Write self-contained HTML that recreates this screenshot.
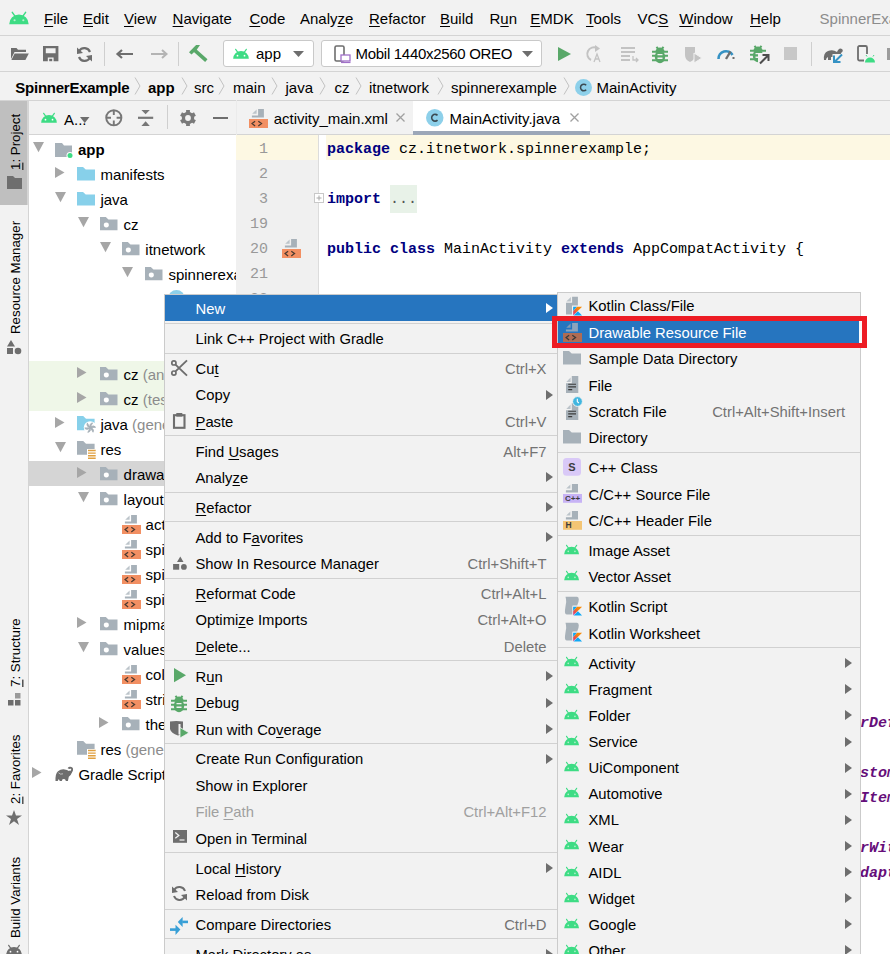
<!DOCTYPE html><html><head><meta charset="utf-8"><title>IDE</title><style>
*{margin:0;padding:0;box-sizing:border-box}
html,body{width:890px;height:954px;overflow:hidden;background:#f2f2f2;font-family:"Liberation Sans",sans-serif;font-size:14.6px;color:#000;position:relative}
.a{position:absolute}
.t{position:absolute;white-space:pre;line-height:1}
.u{text-decoration:underline;text-underline-offset:2px;text-decoration-thickness:1px}
svg{position:absolute;overflow:visible}
.mono{font-family:"Liberation Mono",monospace}
</style></head><body>
<svg class="a" style="left:9.1px;top:11.8px" width="19.9" height="12.14" viewBox="0 0 20 12.2"><path d="M0.2 12.2 A9.8 9.8 0 0 1 19.8 12.2 Z" fill="#3ddc84"/><path d="M3.3 0.4 L5.8 3.9 M16.7 0.4 L14.2 3.9" stroke="#3ddc84" stroke-width="1.5" stroke-linecap="round"/><circle cx="5.6" cy="8.3" r="1.1" fill="#b6efcf"/><circle cx="14.4" cy="8.3" r="1.1" fill="#b6efcf"/></svg>
<div class="t" style="left:44px;top:11px;font-size:15px"><span class="u">F</span>ile</div>
<div class="t" style="left:83px;top:11px;font-size:15px"><span class="u">E</span>dit</div>
<div class="t" style="left:124px;top:11px;font-size:15px"><span class="u">V</span>iew</div>
<div class="t" style="left:172.6px;top:11px;font-size:15px"><span class="u">N</span>avigate</div>
<div class="t" style="left:249.4px;top:11px;font-size:15px"><span class="u">C</span>ode</div>
<div class="t" style="left:300px;top:11px;font-size:15px">Analy<span class="u">z</span>e</div>
<div class="t" style="left:369px;top:11px;font-size:15px"><span class="u">R</span>efactor</div>
<div class="t" style="left:440px;top:11px;font-size:15px"><span class="u">B</span>uild</div>
<div class="t" style="left:489.5px;top:11px;font-size:15px">R<span class="u">u</span>n</div>
<div class="t" style="left:530.3px;top:11px;font-size:15px"><span class="u">E</span>MDK</div>
<div class="t" style="left:586px;top:11px;font-size:15px"><span class="u">T</span>ools</div>
<div class="t" style="left:637.5px;top:11px;font-size:15px">VC<span class="u">S</span></div>
<div class="t" style="left:679.3px;top:11px;font-size:15px"><span class="u">W</span>indow</div>
<div class="t" style="left:750px;top:11px;font-size:15px"><span class="u">H</span>elp</div>
<div class="t" style="left:819.6px;top:11px;font-size:15px;color:#8c8c8c">SpinnerExample</div>
<div class="a" style="left:0;top:35px;width:890px;height:1px;background:#d4d4d4"></div>
<div class="a" style="left:0;top:71px;width:890px;height:1px;background:#d4d4d4"></div>
<svg class="a" style="left:11.2px;top:47.9px" width="18" height="12" viewBox="0 0 18 12"><path d="M0 0 H5.5 L7 1.8 H15 V4 H3.5 L0 11 Z" fill="#6e6e6e"/><path d="M3.6 5.6 H17.8 L14.4 12 H0.4 Z" fill="#6e6e6e"/></svg>
<svg class="a" style="left:43.3px;top:46.4px" width="16" height="16" viewBox="0 0 16 16"><path d="M0 0 H15.4 V15.2 H0 Z M2.8 2.2 V7.3 H12.6 V2.2 Z M4.8 11.6 V15.2 H10.6 V11.6 Z" fill="#6e6e6e" fill-rule="evenodd"/><rect x="6.2" y="12.8" width="3" height="2.4" fill="#6e6e6e"/></svg>
<svg class="a" style="left:76px;top:46px" width="17" height="17" viewBox="0 0 17 17"><path d="M14 6 A6 6 0 0 0 3.2 5" stroke="#6e6e6e" stroke-width="2.2" fill="none"/><path d="M3 11 A6 6 0 0 0 13.8 12" stroke="#6e6e6e" stroke-width="2.2" fill="none"/><path d="M1 1.5 L1 8 L7 7 Z" fill="#6e6e6e"/><path d="M16 15.5 L16 9 L10 10 Z" fill="#6e6e6e"/></svg>
<div class="a" style="left:104px;top:42px;width:1px;height:24px;background:#cfcfcf"></div>
<svg class="a" style="left:116px;top:49px" width="18" height="10" viewBox="0 0 18 10"><path d="M17 5 H2 M6 1 L1.5 5 L6 9" stroke="#6e6e6e" stroke-width="2.2" fill="none"/></svg>
<svg class="a" style="left:150px;top:49px" width="18" height="10" viewBox="0 0 18 10"><path d="M1 5 H16 M12 1 L16.5 5 L12 9" stroke="#b4b4b4" stroke-width="2" fill="none"/></svg>
<div class="a" style="left:178px;top:42px;width:1px;height:24px;background:#cfcfcf"></div>
<svg class="a" style="left:180px;top:40px" width="35" height="28" viewBox="0 0 35 28"><path d="M9 12.2 L16.1 5.1 H20 L16.9 9.4 L11.5 14.6 Z" fill="#59a869"/><path d="M14.8 10.3 L26.3 20.6" stroke="#59a869" stroke-width="3.6"/></svg>
<div class="a" style="left:223px;top:40px;width:91px;height:27px;background:#fff;border:1px solid #c9c9c9;border-radius:3px"></div>
<svg class="a" style="left:233px;top:49px" width="16" height="9.76" viewBox="0 0 20 12.2"><path d="M0.2 12.2 A9.8 9.8 0 0 1 19.8 12.2 Z" fill="#3ddc84"/><path d="M3.3 0.4 L5.8 3.9 M16.7 0.4 L14.2 3.9" stroke="#3ddc84" stroke-width="1.5" stroke-linecap="round"/><circle cx="5.6" cy="8.3" r="1.1" fill="#fff"/><circle cx="14.4" cy="8.3" r="1.1" fill="#fff"/></svg>
<div class="t" style="left:256px;top:46px;font-size:15px">app</div>
<svg class="a" style="left:293px;top:51px" width="11" height="6"><path d="M0 0 L11 0 L5.5 6 Z" fill="#6e6e6e"/></svg>
<div class="a" style="left:321px;top:40px;width:221px;height:27px;background:#fff;border:1px solid #c9c9c9;border-radius:3px"></div>
<svg class="a" style="left:334px;top:45px" width="17" height="18" viewBox="0 0 17 18"><rect x="1" y="1" width="9" height="15" rx="1.5" stroke="#6e6e6e" stroke-width="1.6" fill="none"/><rect x="7" y="10" width="9" height="6" fill="#fff" stroke="#a070c8" stroke-width="1.3"/><path d="M7 17.5 H16.5" stroke="#a070c8" stroke-width="1.2"/></svg>
<div class="t" style="left:355.6px;top:46px;font-size:15px;letter-spacing:-0.3px">Mobil 1440x2560 OREO</div>
<svg class="a" style="left:522px;top:51px" width="11" height="6"><path d="M0 0 L11 0 L5.5 6 Z" fill="#6e6e6e"/></svg>
<svg class="a" style="left:558px;top:47px" width="13" height="14"><path d="M0 0 L13 7 L0 14 Z" fill="#59a869"/></svg>
<svg class="a" style="left:586px;top:45px" width="18" height="18" viewBox="0 0 18 18"><path d="M11 3 A6.5 6.5 0 1 0 5 15" stroke="#c3c3c3" stroke-width="2" fill="none"/><path d="M9 0 L14 3.5 L9 7 Z" fill="#c3c3c3"/><path d="M8 17 L11 9 L14 17 M9.2 14 H12.8" stroke="#c3c3c3" stroke-width="1.3" fill="none"/></svg>
<svg class="a" style="left:621px;top:47px" width="18" height="15" viewBox="0 0 18 15"><path d="M0 1 H14 M0 5 H14 M0 9 H9 M0 13 H9" stroke="#c3c3c3" stroke-width="1.8"/><path d="M12 9 V13 H17 M15 11 L17 13 L15 15" stroke="#c3c3c3" stroke-width="1.3" fill="none"/></svg>
<svg class="a" style="left:652px;top:46px" width="16.0" height="17.5" viewBox="0 0 16 17.5"><ellipse cx="8" cy="10.8" rx="5.2" ry="6.4" fill="#59a869"/><path d="M3.5 5.5 A4.5 4 0 0 1 12.5 5.5 Z" fill="#59a869"/><path d="M0 5.8 H16 M0 9.8 H16 M0 14.3 H16 M4.5 0.8 L6.5 3.5 M11.5 0.8 L9.5 3.5" stroke="#59a869" stroke-width="2"/><path d="M5.5 8.6 H10.5 M5.5 12.3 H10.5" stroke="#f2f2f2" stroke-width="1.4"/></svg>
<svg class="a" style="left:684px;top:46px" width="19" height="18" viewBox="0 0 19 18"><path d="M1 1 H11 V9 Q11 14 6 16 Q1 14 1 9 Z" fill="#c3c3c3"/><path d="M10 7 L18 12 L10 17 Z" fill="#c3c3c3" stroke="#f2f2f2" stroke-width="1"/></svg>
<svg class="a" style="left:717px;top:47px" width="18" height="13" viewBox="0 0 18 13"><path d="M1.5 12 A7.5 7.5 0 0 1 15.5 8" stroke="#3592c4" stroke-width="2.6" fill="none"/><path d="M9 12 L13.5 4.5" stroke="#6e6e6e" stroke-width="2.4"/><path d="M16.5 12 V10" stroke="#6e6e6e" stroke-width="2"/></svg>
<svg class="a" style="left:750px;top:45px" width="16.0" height="17.5" viewBox="0 0 16 17.5"><ellipse cx="8" cy="10.8" rx="5.2" ry="6.4" fill="#59a869"/><path d="M3.5 5.5 A4.5 4 0 0 1 12.5 5.5 Z" fill="#59a869"/><path d="M0 5.8 H16 M0 9.8 H16 M0 14.3 H16 M4.5 0.8 L6.5 3.5 M11.5 0.8 L9.5 3.5" stroke="#59a869" stroke-width="2"/><path d="M5.5 8.6 H10.5 M5.5 12.3 H10.5" stroke="#f2f2f2" stroke-width="1.4"/></svg>
<svg class="a" style="left:758px;top:53px" width="12" height="12" viewBox="0 0 12 12"><rect x="0" y="0" width="12" height="12" fill="#f2f2f2"/><path d="M2 10.5 L10 2.5 M4.5 2 H10.5 V8" stroke="#4d4d4d" stroke-width="2" fill="none"/></svg>
<div class="a" style="left:784px;top:47px;width:13px;height:13px;background:#c8c8c8"></div>
<div class="a" style="left:811px;top:42px;width:1px;height:24px;background:#cfcfcf"></div>
<svg class="a" style="left:823px;top:45px" width="21" height="18" viewBox="0 0 21 18"><path d="M1 15 Q0 8 5 6 Q10 4 14 7 Q16 2 19 4 Q21 6 18 8 L17 15 H14 V12 H8 V15 H5 V12 Q3 13 3 15 Z" fill="#6e6e6e"/><path d="M9.5 9 H21 V18 H9.5 Z" fill="#f2f2f2"/><path d="M19 9.5 L12 16.5 M11 10.5 V17 H17.5" stroke="#3592c4" stroke-width="2" fill="none"/></svg>
<svg class="a" style="left:857px;top:45px" width="18" height="18" viewBox="0 0 18 18"><rect x="1" y="1" width="9" height="14.5" rx="1.5" stroke="#6e6e6e" stroke-width="1.8" fill="none"/><rect x="7" y="9" width="11" height="9" fill="#f2f2f2"/><path d="M8 17.5 A5 5 0 0 1 18 17.5 Z" fill="#3ddc84"/><path d="M10 11.5 L9 10 M16 11.5 L17 10" stroke="#3ddc84" stroke-width="1"/></svg>
<div class="a" style="left:887px;top:48px;width:3px;height:12px;background:#9c9c9c"></div>
<div class="t" style="left:15.3px;top:79.8px;font-size:15px;font-weight:bold;letter-spacing:-0.25px">SpinnerExample</div>
<svg class="a" style="left:133.5px;top:77px" width="7" height="18" viewBox="0 0 7 18"><path d="M1 0.5 L6 9 L1 17.5" stroke="#c2c2c2" stroke-width="1" fill="none"/></svg>
<div class="t" style="left:148px;top:79.8px;font-size:15px;font-weight:bold">app</div>
<svg class="a" style="left:180.5px;top:77px" width="7" height="18" viewBox="0 0 7 18"><path d="M1 0.5 L6 9 L1 17.5" stroke="#c2c2c2" stroke-width="1" fill="none"/></svg>
<div class="t" style="left:194px;top:79.8px;font-size:15px">src</div>
<svg class="a" style="left:217.6px;top:77px" width="7" height="18" viewBox="0 0 7 18"><path d="M1 0.5 L6 9 L1 17.5" stroke="#c2c2c2" stroke-width="1" fill="none"/></svg>
<div class="t" style="left:233px;top:79.8px;font-size:15px">main</div>
<svg class="a" style="left:271px;top:77px" width="7" height="18" viewBox="0 0 7 18"><path d="M1 0.5 L6 9 L1 17.5" stroke="#c2c2c2" stroke-width="1" fill="none"/></svg>
<div class="t" style="left:285.5px;top:79.8px;font-size:15px">java</div>
<svg class="a" style="left:318.7px;top:77px" width="7" height="18" viewBox="0 0 7 18"><path d="M1 0.5 L6 9 L1 17.5" stroke="#c2c2c2" stroke-width="1" fill="none"/></svg>
<div class="t" style="left:334.5px;top:79.8px;font-size:15px">cz</div>
<svg class="a" style="left:355px;top:77px" width="7" height="18" viewBox="0 0 7 18"><path d="M1 0.5 L6 9 L1 17.5" stroke="#c2c2c2" stroke-width="1" fill="none"/></svg>
<div class="t" style="left:369px;top:79.8px;font-size:15px">itnetwork</div>
<svg class="a" style="left:437px;top:77px" width="7" height="18" viewBox="0 0 7 18"><path d="M1 0.5 L6 9 L1 17.5" stroke="#c2c2c2" stroke-width="1" fill="none"/></svg>
<div class="t" style="left:451px;top:79.8px;font-size:15px">spinnerexample</div>
<svg class="a" style="left:563px;top:77px" width="7" height="18" viewBox="0 0 7 18"><path d="M1 0.5 L6 9 L1 17.5" stroke="#c2c2c2" stroke-width="1" fill="none"/></svg>
<svg class="a" style="left:574.5px;top:79px" width="17" height="17" viewBox="0 0 17 17"><circle cx="8.5" cy="8.5" r="8.5" fill="#8dd0ea"/><path d="M11.2 6.2 A3.3 3.3 0 1 0 11.2 10.8" stroke="#3b4a52" stroke-width="1.5" fill="none"/></svg>
<div class="t" style="left:596.5px;top:79.8px;font-size:15px">MainActivity</div>
<div class="a" style="left:0;top:100px;width:890px;height:1px;background:#d4d4d4"></div>
<div class="a" style="left:0;top:101px;width:28px;height:853px;background:#f2f2f2"></div>
<div class="a" style="left:28px;top:101px;width:1px;height:853px;background:#d4d4d4"></div>
<div class="a" style="left:0;top:101px;width:27px;height:104px;background:#bfbfbf"></div><div class="a" style="left:27px;top:101px;width:1px;height:104px;background:#d5d5d5"></div>
<div class="t" style="left:16.2px;top:170px;font-size:13.3px;transform-origin:0 0;transform:rotate(-90deg) translate(0,-50%)"><span class="u">1</span>: Project</div>
<svg class="a" style="left:7px;top:176px" width="15" height="13" viewBox="0 0 15 13"><path d="M0 0 H6 L8 2 H15 V13 H0 Z" fill="#6e6e6e"/></svg>
<div class="t" style="left:16.2px;top:334px;font-size:13.3px;transform-origin:0 0;transform:rotate(-90deg) translate(0,-50%)">Resource Manager</div>
<svg class="a" style="left:7px;top:340px" width="15" height="14" viewBox="0 0 15 14"><path d="M4 0 L8 6.5 H0 Z" fill="#6e6e6e"/><rect x="0" y="8" width="6" height="6" fill="#6e6e6e"/><circle cx="11" cy="11" r="3.3" fill="#6e6e6e"/></svg>
<div class="t" style="left:16.2px;top:687px;font-size:13.3px;transform-origin:0 0;transform:rotate(-90deg) translate(0,-50%)"><span class="u">7</span>: Structure</div>
<svg class="a" style="left:8px;top:693px" width="13" height="13" viewBox="0 0 13 13"><rect x="7" y="0" width="5.5" height="5.5" fill="#9a9a9a"/><rect x="0" y="7" width="5.5" height="5.5" fill="#6e6e6e"/><rect x="7" y="7" width="5.5" height="5.5" fill="#6e6e6e"/></svg>
<div class="t" style="left:16.2px;top:804px;font-size:13.3px;transform-origin:0 0;transform:rotate(-90deg) translate(0,-50%)"><span class="u">2</span>: Favorites</div>
<svg class="a" style="left:6px;top:810px" width="16" height="15" viewBox="0 0 16 15"><path d="M8 0 L10 5.5 H16 L11 9 L13 15 L8 11.3 L3 15 L5 9 L0 5.5 H6 Z" fill="#6e6e6e"/></svg>
<div class="t" style="left:16.2px;top:938px;font-size:13.3px;transform-origin:0 0;transform:rotate(-90deg) translate(0,-50%)">Build Variants</div>
<svg class="a" style="left:6px;top:945px" width="16" height="9.76" viewBox="0 0 20 12.2"><path d="M0.2 12.2 A9.8 9.8 0 0 1 19.8 12.2 Z" fill="#6e6e6e"/><path d="M3.3 0.4 L5.8 3.9 M16.7 0.4 L14.2 3.9" stroke="#6e6e6e" stroke-width="1.5" stroke-linecap="round"/><circle cx="5.6" cy="8.3" r="1.1" fill="#fff"/><circle cx="14.4" cy="8.3" r="1.1" fill="#fff"/></svg>
<div class="a" style="left:29px;top:101px;width:207px;height:33px;background:#f2f2f2"></div>
<div class="a" style="left:29px;top:134px;width:207px;height:1px;background:#d4d4d4"></div>
<div class="a" style="left:29px;top:135px;width:207px;height:819px;background:#fff"></div>
<svg class="a" style="left:41px;top:113px" width="16" height="9.76" viewBox="0 0 20 12.2"><path d="M0.2 12.2 A9.8 9.8 0 0 1 19.8 12.2 Z" fill="#3ddc84"/><path d="M3.3 0.4 L5.8 3.9 M16.7 0.4 L14.2 3.9" stroke="#3ddc84" stroke-width="1.5" stroke-linecap="round"/><circle cx="5.6" cy="8.3" r="1.1" fill="#fff"/><circle cx="14.4" cy="8.3" r="1.1" fill="#fff"/></svg>
<div class="t" style="left:64px;top:112px;font-size:15px">A...</div>
<svg class="a" style="left:79.6px;top:116.5px" width="9.5" height="6"><path d="M0 0 L9.5 0 L4.75 6 Z" fill="#6e6e6e"/></svg>
<svg class="a" style="left:105.3px;top:109px" width="18" height="18" viewBox="0 0 18 18"><circle cx="8.8" cy="8.8" r="7.6" stroke="#777" stroke-width="1.9" fill="none"/><path d="M8.8 1.5 V6 M8.8 11.6 V16.1 M1.5 8.8 H6 M11.6 8.8 H16.1" stroke="#777" stroke-width="1.9"/></svg>
<svg class="a" style="left:138.4px;top:110px" width="16" height="16" viewBox="0 0 16 16"><path d="M0 7.8 H15.2" stroke="#777" stroke-width="2.2"/><path d="M3.4 0.1 H11.8 L7.6 4.3 Z M3.4 15.9 H11.8 L7.6 11.2 Z" fill="#777"/></svg>
<div class="a" style="left:166.5px;top:105px;width:1px;height:24px;background:#cfcfcf"></div>
<svg class="a" style="left:179.8px;top:110px" width="16" height="16" viewBox="0 0 16 16"><circle cx="8" cy="8" r="6.2" fill="#7a7a7a"/><rect transform="rotate(0 8 8)" x="6.1" y="0" width="3.8" height="16" fill="#7a7a7a"/><rect transform="rotate(60 8 8)" x="6.1" y="0" width="3.8" height="16" fill="#7a7a7a"/><rect transform="rotate(120 8 8)" x="6.1" y="0" width="3.8" height="16" fill="#7a7a7a"/><circle cx="8" cy="8" r="2.9" fill="#f2f2f2"/></svg>
<div class="a" style="left:212.5px;top:117px;width:15.5px;height:2px;background:#6e6e6e"></div>
<div class="a" style="left:29px;top:361px;width:207px;height:50px;background:#eff7e8"></div>
<div class="a" style="left:29px;top:461px;width:207px;height:25px;background:#d5d5d5"></div>
<svg class="a" style="left:33px;top:142px" width="11" height="10.3"><path d="M0 0 L11 0 L5.5 10.3 Z" fill="#a6a6a6"/></svg>
<svg class="a" style="left:55px;top:143px" width="19" height="16" viewBox="0 0 19 16"><path d="M0 0 H7 L9 2.5 H17 V14 H0 Z" fill="#a7b1b9"/><circle cx="15" cy="12.5" r="3.5" fill="#fff"/><circle cx="15" cy="12.5" r="2.5" fill="#3ddc84"/></svg>
<div class="t" style="left:78px;top:141.8px;font-size:15px;font-weight:bold;">app</div>
<svg class="a" style="left:55px;top:167.4px" width="9.5" height="11"><path d="M0 0 L9.5 5.5 L0 11 Z" fill="#a6a6a6"/></svg>
<svg class="a" style="left:77px;top:167.3px" width="18" height="13.5" viewBox="0 0 18 14" preserveAspectRatio="none"><path d="M0 0 H6 L8.7 2.6 H18 V14 H0 Z" fill="#87d0ea"/></svg>
<div class="t" style="left:100.4px;top:166.8px;font-size:15px;">manifests</div>
<svg class="a" style="left:55px;top:192px" width="11" height="10.3"><path d="M0 0 L11 0 L5.5 10.3 Z" fill="#a6a6a6"/></svg>
<svg class="a" style="left:77px;top:192.3px" width="18" height="13.5" viewBox="0 0 18 14" preserveAspectRatio="none"><path d="M0 0 H6 L8.7 2.6 H18 V14 H0 Z" fill="#87d0ea"/></svg>
<div class="t" style="left:100.4px;top:191.8px;font-size:15px;">java</div>
<svg class="a" style="left:77.5px;top:217px" width="11" height="10.3"><path d="M0 0 L11 0 L5.5 10.3 Z" fill="#a6a6a6"/></svg>
<svg class="a" style="left:100px;top:216.5px" width="17.5" height="13.3" viewBox="0 0 18 14" preserveAspectRatio="none"><path d="M0 0 H6 L8.7 2.6 H18 V14 H0 Z" fill="#a7b1b9"/><circle cx="6.5" cy="8.5" r="2.6" fill="#fff"/></svg>
<div class="t" style="left:123.6px;top:216.8px;font-size:15px;">cz</div>
<svg class="a" style="left:100px;top:242px" width="11" height="10.3"><path d="M0 0 L11 0 L5.5 10.3 Z" fill="#a6a6a6"/></svg>
<svg class="a" style="left:122.4px;top:241.5px" width="17.5" height="13.3" viewBox="0 0 18 14" preserveAspectRatio="none"><path d="M0 0 H6 L8.7 2.6 H18 V14 H0 Z" fill="#a7b1b9"/><circle cx="6.5" cy="8.5" r="2.6" fill="#fff"/></svg>
<div class="t" style="left:145.3px;top:241.8px;font-size:15px;">itnetwork</div>
<svg class="a" style="left:122.4px;top:267px" width="11" height="10.3"><path d="M0 0 L11 0 L5.5 10.3 Z" fill="#a6a6a6"/></svg>
<svg class="a" style="left:144.8px;top:266.5px" width="17.5" height="13.3" viewBox="0 0 18 14" preserveAspectRatio="none"><path d="M0 0 H6 L8.7 2.6 H18 V14 H0 Z" fill="#a7b1b9"/><circle cx="6.5" cy="8.5" r="2.6" fill="#fff"/></svg>
<div class="t" style="left:168.4px;top:266.8px;font-size:15px;">spinnerexample</div>
<svg class="a" style="left:168px;top:290px" width="17" height="17" viewBox="0 0 17 17"><circle cx="8.5" cy="8.5" r="8.5" fill="#8dd0ea"/><path d="M11.2 6.2 A3.3 3.3 0 1 0 11.2 10.8" stroke="#3b4a52" stroke-width="1.5" fill="none"/></svg>
<svg class="a" style="left:77px;top:367.4px" width="9.5" height="11"><path d="M0 0 L9.5 5.5 L0 11 Z" fill="#a6a6a6"/></svg>
<svg class="a" style="left:100px;top:366.5px" width="17.5" height="13.3" viewBox="0 0 18 14" preserveAspectRatio="none"><path d="M0 0 H6 L8.7 2.6 H18 V14 H0 Z" fill="#a7b1b9"/><circle cx="6.5" cy="8.5" r="2.6" fill="#fff"/></svg>
<div class="t" style="left:123.6px;top:366.8px;font-size:15px;">cz<span style="color:#8c8c8c"> (androidTest)</span></div>
<svg class="a" style="left:77px;top:392.4px" width="9.5" height="11"><path d="M0 0 L9.5 5.5 L0 11 Z" fill="#a6a6a6"/></svg>
<svg class="a" style="left:100px;top:391.5px" width="17.5" height="13.3" viewBox="0 0 18 14" preserveAspectRatio="none"><path d="M0 0 H6 L8.7 2.6 H18 V14 H0 Z" fill="#a7b1b9"/><circle cx="6.5" cy="8.5" r="2.6" fill="#fff"/></svg>
<div class="t" style="left:123.6px;top:391.8px;font-size:15px;">cz<span style="color:#8c8c8c"> (test)</span></div>
<svg class="a" style="left:55px;top:417.4px" width="9.5" height="11"><path d="M0 0 L9.5 5.5 L0 11 Z" fill="#a6a6a6"/></svg>
<svg class="a" style="left:77.2px;top:416px" width="20" height="19" viewBox="0 0 20 19"><path d="M0 0 H6.2 L9 2.8 H17.6 V14.2 H0 Z" fill="#87d0ea"/><circle cx="13.2" cy="11.6" r="6.4" fill="#fff"/><g fill="#a7b1b9" stroke="#a7b1b9" stroke-width="0.9" stroke-linejoin="round"><path transform="rotate(0 13.2 11.6)" d="M13.2 11.6 Q12.2 7.2 15.6 6.9 Q14.2 9 13.2 11.6 Z"/><path transform="rotate(60 13.2 11.6)" d="M13.2 11.6 Q12.2 7.2 15.6 6.9 Q14.2 9 13.2 11.6 Z"/><path transform="rotate(120 13.2 11.6)" d="M13.2 11.6 Q12.2 7.2 15.6 6.9 Q14.2 9 13.2 11.6 Z"/><path transform="rotate(180 13.2 11.6)" d="M13.2 11.6 Q12.2 7.2 15.6 6.9 Q14.2 9 13.2 11.6 Z"/><path transform="rotate(240 13.2 11.6)" d="M13.2 11.6 Q12.2 7.2 15.6 6.9 Q14.2 9 13.2 11.6 Z"/><path transform="rotate(300 13.2 11.6)" d="M13.2 11.6 Q12.2 7.2 15.6 6.9 Q14.2 9 13.2 11.6 Z"/></g><circle cx="13.2" cy="11.6" r="1.2" fill="#a7b1b9"/></svg>
<div class="t" style="left:100.4px;top:416.8px;font-size:15px;">java<span style="color:#8c8c8c"> (generated)</span></div>
<svg class="a" style="left:55px;top:442px" width="11" height="10.3"><path d="M0 0 L11 0 L5.5 10.3 Z" fill="#a6a6a6"/></svg>
<svg class="a" style="left:77.2px;top:441.2px" width="20" height="19" viewBox="0 0 20 19"><path d="M0 0 H6.2 L9 2.8 H17.6 V13.8 H0 Z" fill="#a7b1b9"/><rect x="10" y="8" width="10" height="11" fill="#fff"/><path d="M11 9.5 H18.7 M11 12.1 H18.7 M11 14.7 H18.7 M11 17.3 H18.7" stroke="#e0a040" stroke-width="1.4"/></svg>
<div class="t" style="left:100.4px;top:441.8px;font-size:15px;">res</div>
<svg class="a" style="left:77px;top:467.4px" width="9.5" height="11"><path d="M0 0 L9.5 5.5 L0 11 Z" fill="#a6a6a6"/></svg>
<svg class="a" style="left:100px;top:466.5px" width="17.5" height="13.3" viewBox="0 0 18 14" preserveAspectRatio="none"><path d="M0 0 H6 L8.7 2.6 H18 V14 H0 Z" fill="#a7b1b9"/><circle cx="6.5" cy="8.5" r="2.6" fill="#fff"/></svg>
<div class="t" style="left:123.6px;top:466.8px;font-size:15px;">drawable</div>
<svg class="a" style="left:77.5px;top:492px" width="11" height="10.3"><path d="M0 0 L11 0 L5.5 10.3 Z" fill="#a6a6a6"/></svg>
<svg class="a" style="left:100px;top:491.5px" width="17.5" height="13.3" viewBox="0 0 18 14" preserveAspectRatio="none"><path d="M0 0 H6 L8.7 2.6 H18 V14 H0 Z" fill="#a7b1b9"/><circle cx="6.5" cy="8.5" r="2.6" fill="#fff"/></svg>
<div class="t" style="left:123.6px;top:491.8px;font-size:15px;">layout</div>
<svg class="a" style="left:122px;top:515px" width="19" height="19" viewBox="0 0 19 19"><path d="M3.2 4.8 L7.6 0.4 V4.8 Z" fill="#bcc4ca"/><path d="M9.1 0 H14.9 V8.6 H2.9 V6.5 H9.1 Z" fill="#a7b1b9"/><rect x="0" y="10" width="19" height="9" fill="#f28f62"/><path d="M6.1 12.2 L3.1 14.5 L6.1 16.9 M9.3 12.2 L12.5 14.5 L9.3 16.9" stroke="#4a3a30" stroke-width="1.3" fill="none"/></svg>
<div class="t" style="left:145.6px;top:516.8px;font-size:15px;">activity_main.xml</div>
<svg class="a" style="left:122px;top:540px" width="19" height="19" viewBox="0 0 19 19"><path d="M3.2 4.8 L7.6 0.4 V4.8 Z" fill="#bcc4ca"/><path d="M9.1 0 H14.9 V8.6 H2.9 V6.5 H9.1 Z" fill="#a7b1b9"/><rect x="0" y="10" width="19" height="9" fill="#f28f62"/><path d="M6.1 12.2 L3.1 14.5 L6.1 16.9 M9.3 12.2 L12.5 14.5 L9.3 16.9" stroke="#4a3a30" stroke-width="1.3" fill="none"/></svg>
<div class="t" style="left:145.6px;top:541.8px;font-size:15px;">spinner_item.xml</div>
<svg class="a" style="left:122px;top:565px" width="19" height="19" viewBox="0 0 19 19"><path d="M3.2 4.8 L7.6 0.4 V4.8 Z" fill="#bcc4ca"/><path d="M9.1 0 H14.9 V8.6 H2.9 V6.5 H9.1 Z" fill="#a7b1b9"/><rect x="0" y="10" width="19" height="9" fill="#f28f62"/><path d="M6.1 12.2 L3.1 14.5 L6.1 16.9 M9.3 12.2 L12.5 14.5 L9.3 16.9" stroke="#4a3a30" stroke-width="1.3" fill="none"/></svg>
<div class="t" style="left:145.6px;top:566.8px;font-size:15px;">spinner_item2.xml</div>
<svg class="a" style="left:122px;top:590px" width="19" height="19" viewBox="0 0 19 19"><path d="M3.2 4.8 L7.6 0.4 V4.8 Z" fill="#bcc4ca"/><path d="M9.1 0 H14.9 V8.6 H2.9 V6.5 H9.1 Z" fill="#a7b1b9"/><rect x="0" y="10" width="19" height="9" fill="#f28f62"/><path d="M6.1 12.2 L3.1 14.5 L6.1 16.9 M9.3 12.2 L12.5 14.5 L9.3 16.9" stroke="#4a3a30" stroke-width="1.3" fill="none"/></svg>
<div class="t" style="left:145.6px;top:591.8px;font-size:15px;">spinner_item3.xml</div>
<svg class="a" style="left:77px;top:617.4px" width="9.5" height="11"><path d="M0 0 L9.5 5.5 L0 11 Z" fill="#a6a6a6"/></svg>
<svg class="a" style="left:100px;top:616.5px" width="17.5" height="13.3" viewBox="0 0 18 14" preserveAspectRatio="none"><path d="M0 0 H6 L8.7 2.6 H18 V14 H0 Z" fill="#a7b1b9"/><circle cx="6.5" cy="8.5" r="2.6" fill="#fff"/></svg>
<div class="t" style="left:123.6px;top:616.8px;font-size:15px;">mipmap</div>
<svg class="a" style="left:77.5px;top:642px" width="11" height="10.3"><path d="M0 0 L11 0 L5.5 10.3 Z" fill="#a6a6a6"/></svg>
<svg class="a" style="left:100px;top:641.5px" width="17.5" height="13.3" viewBox="0 0 18 14" preserveAspectRatio="none"><path d="M0 0 H6 L8.7 2.6 H18 V14 H0 Z" fill="#a7b1b9"/><circle cx="6.5" cy="8.5" r="2.6" fill="#fff"/></svg>
<div class="t" style="left:123.6px;top:641.8px;font-size:15px;">values</div>
<svg class="a" style="left:122px;top:665px" width="19" height="19" viewBox="0 0 19 19"><path d="M3.2 4.8 L7.6 0.4 V4.8 Z" fill="#bcc4ca"/><path d="M9.1 0 H14.9 V8.6 H2.9 V6.5 H9.1 Z" fill="#a7b1b9"/><rect x="0" y="10" width="19" height="9" fill="#f28f62"/><path d="M6.1 12.2 L3.1 14.5 L6.1 16.9 M9.3 12.2 L12.5 14.5 L9.3 16.9" stroke="#4a3a30" stroke-width="1.3" fill="none"/></svg>
<div class="t" style="left:145.6px;top:666.8px;font-size:15px;">colors.xml</div>
<svg class="a" style="left:122px;top:690px" width="19" height="19" viewBox="0 0 19 19"><path d="M3.2 4.8 L7.6 0.4 V4.8 Z" fill="#bcc4ca"/><path d="M9.1 0 H14.9 V8.6 H2.9 V6.5 H9.1 Z" fill="#a7b1b9"/><rect x="0" y="10" width="19" height="9" fill="#f28f62"/><path d="M6.1 12.2 L3.1 14.5 L6.1 16.9 M9.3 12.2 L12.5 14.5 L9.3 16.9" stroke="#4a3a30" stroke-width="1.3" fill="none"/></svg>
<div class="t" style="left:145.6px;top:691.8px;font-size:15px;">strings.xml</div>
<svg class="a" style="left:99px;top:717.4px" width="9.5" height="11"><path d="M0 0 L9.5 5.5 L0 11 Z" fill="#a6a6a6"/></svg>
<svg class="a" style="left:122px;top:716.5px" width="17.5" height="13.3" viewBox="0 0 18 14" preserveAspectRatio="none"><path d="M0 0 H6 L8.7 2.6 H18 V14 H0 Z" fill="#a7b1b9"/><circle cx="6.5" cy="8.5" r="2.6" fill="#fff"/></svg>
<div class="t" style="left:145.6px;top:716.8px;font-size:15px;">themes</div>
<svg class="a" style="left:77.2px;top:741.2px" width="20" height="19" viewBox="0 0 20 19"><path d="M0 0 H6.2 L9 2.8 H17.6 V13.8 H0 Z" fill="#a7b1b9"/><rect x="10" y="8" width="10" height="11" fill="#fff"/><path d="M11 9.5 H18.7 M11 12.1 H18.7 M11 14.7 H18.7 M11 17.3 H18.7" stroke="#e0a040" stroke-width="1.4"/></svg>
<div class="t" style="left:100.4px;top:741.8px;font-size:15px;">res<span style="color:#8c8c8c"> (generated)</span></div>
<svg class="a" style="left:31.5px;top:767.4px" width="9.5" height="11"><path d="M0 0 L9.5 5.5 L0 11 Z" fill="#a6a6a6"/></svg>
<svg class="a" style="left:54.9px;top:767px" width="19" height="15" viewBox="0 0 19 15"><path d="M0.5 13.9 Q0.2 6.5 3 4.2 Q5.5 2.2 8.5 2.3 Q12.5 2.5 14.5 4.6 L17.2 5 Q16 8.2 13.8 9.8 L12.9 13.9 H10.9 L10 12.3 Q8.5 11.7 7.5 12.3 L6.8 13.9 H4.8 L3.8 12.1 L2.7 13.9 Z" fill="#6e6e6e"/><path d="M13.6 4.3 Q16.6 5.6 17.1 3 Q17.4 0.5 14.8 0.7 Q13.8 0.9 13.5 1.7" stroke="#6e6e6e" stroke-width="1.9" fill="none"/><path d="M3.5 5.8 Q5.5 8 8 6.8" stroke="#fff" stroke-width="0.8" fill="none" opacity="0.7"/></svg>
<div class="t" style="left:78.4px;top:766.8px;font-size:15px;">Gradle Scripts</div>
<div class="a" style="left:236px;top:101px;width:654px;height:34px;background:#f2f2f2"></div><div class="a" style="left:236px;top:100px;width:1px;height:35px;background:#ebebeb"></div>
<div class="a" style="left:237px;top:134px;width:653px;height:1px;background:#d4d4d4"></div>
<svg class="a" style="left:249px;top:109px" width="19" height="19" viewBox="0 0 19 19"><path d="M3.2 4.8 L7.6 0.4 V4.8 Z" fill="#bcc4ca"/><path d="M9.1 0 H14.9 V8.6 H2.9 V6.5 H9.1 Z" fill="#a7b1b9"/><rect x="0" y="10" width="19" height="9" fill="#f28f62"/><path d="M6.1 12.2 L3.1 14.5 L6.1 16.9 M9.3 12.2 L12.5 14.5 L9.3 16.9" stroke="#4a3a30" stroke-width="1.3" fill="none"/></svg>
<div class="t" style="left:273.7px;top:111px;font-size:15px">activity_main.xml</div>
<svg class="a" style="left:396px;top:113px" width="9" height="9"><path d="M0.5 0.5 L8.5 8.5 M8.5 0.5 L0.5 8.5" stroke="#a0a0a0" stroke-width="1.3"/></svg>
<div class="a" style="left:413px;top:101px;width:177px;height:34px;background:#fff"></div>
<div class="a" style="left:413px;top:131px;width:177px;height:4px;background:#9ca7b8"></div>
<svg class="a" style="left:425.5px;top:109px" width="17.5" height="17.5" viewBox="0 0 17 17"><circle cx="8.5" cy="8.5" r="8.5" fill="#8dd0ea"/><path d="M11.2 6.2 A3.3 3.3 0 1 0 11.2 10.8" stroke="#3b4a52" stroke-width="1.5" fill="none"/></svg>
<div class="t" style="left:449.5px;top:111px;font-size:15px">MainActivity.java</div>
<svg class="a" style="left:570px;top:113px" width="9" height="9"><path d="M0.5 0.5 L8.5 8.5 M8.5 0.5 L0.5 8.5" stroke="#a0a0a0" stroke-width="1.3"/></svg>
<div class="a" style="left:236px;top:135px;width:654px;height:819px;background:#fff"></div>
<div class="a" style="left:236px;top:135px;width:82px;height:819px;background:#f0f0f0"></div>
<div class="a" style="left:318px;top:135px;width:1px;height:819px;background:#dcdcdc"></div>
<div class="a" style="left:236px;top:135px;width:82px;height:25px;background:#fdf8e3"></div>
<div class="a" style="left:326px;top:135px;width:564px;height:25px;background:#fdf8e3"></div>
<div class="t mono" style="left:237px;width:31px;text-align:right;top:142px;font-size:15px;color:#999">1</div>
<div class="t mono" style="left:237px;width:31px;text-align:right;top:167px;font-size:15px;color:#999">2</div>
<div class="t mono" style="left:237px;width:31px;text-align:right;top:192px;font-size:15px;color:#999">3</div>
<div class="t mono" style="left:237px;width:31px;text-align:right;top:217px;font-size:15px;color:#999">19</div>
<div class="t mono" style="left:237px;width:31px;text-align:right;top:242px;font-size:15px;color:#999">20</div>
<div class="t mono" style="left:237px;width:31px;text-align:right;top:267px;font-size:15px;color:#999">21</div>
<div class="t mono" style="left:237px;width:31px;text-align:right;top:292px;font-size:15px;color:#999">22</div>
<div class="t mono" style="left:327px;top:142px;font-size:15px;color:#000"><b style="color:#000080">package</b> cz.itnetwork.spinnerexample;</div>
<div class="t mono" style="left:327px;top:192px;font-size:15px;color:#000"><b style="color:#000080">import</b> <span style="background:#e8f2e8;color:#555;padding:6px 0 5px">...</span></div>
<div class="t mono" style="left:327px;top:242px;font-size:15px;color:#000"><b style="color:#000080">public class</b> MainActivity <b style="color:#000080">extends</b> AppCompatActivity {</div>
<svg class="a" style="left:313.5px;top:193px" width="10" height="10"><rect x="0.5" y="0.5" width="9" height="9" fill="#fff" stroke="#c8c8c8"/><path d="M2.5 5 H7.5 M5 2.5 V7.5" stroke="#a8a8a8"/></svg>
<svg class="a" style="left:281.5px;top:239px" width="19" height="19" viewBox="0 0 19 19"><path d="M3.2 4.8 L7.6 0.4 V4.8 Z" fill="#bcc4ca"/><path d="M9.1 0 H14.9 V8.6 H2.9 V6.5 H9.1 Z" fill="#a7b1b9"/><rect x="0" y="10" width="19" height="9" fill="#f28f62"/><path d="M6.1 12.2 L3.1 14.5 L6.1 16.9 M9.3 12.2 L12.5 14.5 L9.3 16.9" stroke="#4a3a30" stroke-width="1.3" fill="none"/></svg>
<div class="t mono" style="left:860px;top:716px;font-size:15px"><b style="color:#660e7a;font-style:italic">rDefault</b></div>
<div class="t mono" style="left:860px;top:766px;font-size:15px"><b style="color:#660e7a;font-style:italic">stom</b></div>
<div class="t mono" style="left:860px;top:791px;font-size:15px"><b style="color:#660e7a;font-style:italic">Item</b></div>
<div class="t mono" style="left:860px;top:841px;font-size:15px"><b style="color:#660e7a;font-style:italic">rWith</b></div>
<div class="t mono" style="left:860px;top:866px;font-size:15px"><b style="color:#660e7a;font-style:italic">dapter</b></div>
<div class="a" style="left:164px;top:294px;width:394px;height:700px;background:#f2f2f2;border:1px solid #cbcbcb"></div>
<div class="a" style="left:165px;top:295.00px;width:392px;height:26.4px;background:#2675bf"></div>
<div class="t" style="left:195.5px;top:302.00px;color:#fff;font-size:14.8px">New</div>
<svg class="a" style="left:546px;top:303.4px" width="7" height="10"><path d="M0 0 L7 5.0 L0 10 Z" fill="#fff"/></svg>
<div class="a" style="left:165px;top:322.65px;width:392px;height:1px;background:#d1d1d1"></div>
<div class="t" style="left:195.5px;top:331.90px;color:#000;font-size:14.8px">Link C++ Project with Gradle</div>
<div class="a" style="left:165px;top:352.55px;width:392px;height:1px;background:#d1d1d1"></div>
<div class="t" style="left:195.5px;top:361.80px;color:#000;font-size:14.8px">Cu<span class="u">t</span></div>
<svg class="a" style="left:170.8px;top:359.90px" width="17" height="17" viewBox="0 0 17 17"><circle cx="2.9" cy="2.9" r="2.1" stroke="#6e6e6e" stroke-width="1.7" fill="none"/><circle cx="2.9" cy="13.1" r="2.1" stroke="#6e6e6e" stroke-width="1.7" fill="none"/><path d="M4.5 4.6 L16 15.6 M4.5 11.4 L16 0.4" stroke="#6e6e6e" stroke-width="1.9"/></svg>
<div class="t" style="right:343.5px;top:361.80px;font-size:14.8px;color:#737373">Ctrl+X</div>
<div class="t" style="left:195.5px;top:388.20px;color:#000;font-size:14.8px">Copy</div>
<svg class="a" style="left:546px;top:389.5999999999999px" width="7" height="10"><path d="M0 0 L7 5.0 L0 10 Z" fill="#6e6e6e"/></svg>
<div class="t" style="left:195.5px;top:414.60px;color:#000;font-size:14.8px"><span class="u">P</span>aste</div>
<svg class="a" style="left:172.7px;top:412.50px" width="13" height="16" viewBox="0 0 13 16"><rect x="1" y="2.2" width="10.5" height="12.6" stroke="#6e6e6e" stroke-width="2.1" fill="none"/><rect x="3.3" y="0" width="6" height="3.6" fill="#6e6e6e"/></svg>
<div class="t" style="right:343.5px;top:414.60px;font-size:14.8px;color:#737373">Ctrl+V</div>
<div class="a" style="left:165px;top:435.25px;width:392px;height:1px;background:#d1d1d1"></div>
<div class="t" style="left:195.5px;top:444.50px;color:#000;font-size:14.8px">Find <span class="u">U</span>sages</div>
<div class="t" style="right:343.5px;top:444.50px;font-size:14.8px;color:#737373">Alt+F7</div>
<div class="t" style="left:195.5px;top:470.90px;color:#000;font-size:14.8px">Analy<span class="u">z</span>e</div>
<svg class="a" style="left:546px;top:472.29999999999984px" width="7" height="10"><path d="M0 0 L7 5.0 L0 10 Z" fill="#6e6e6e"/></svg>
<div class="a" style="left:165px;top:491.55px;width:392px;height:1px;background:#d1d1d1"></div>
<div class="t" style="left:195.5px;top:500.80px;color:#000;font-size:14.8px"><span class="u">R</span>efactor</div>
<svg class="a" style="left:546px;top:502.1999999999998px" width="7" height="10"><path d="M0 0 L7 5.0 L0 10 Z" fill="#6e6e6e"/></svg>
<div class="a" style="left:165px;top:521.45px;width:392px;height:1px;background:#d1d1d1"></div>
<div class="t" style="left:195.5px;top:530.70px;color:#000;font-size:14.8px">Add to F<span class="u">a</span>vorites</div>
<svg class="a" style="left:546px;top:532.0999999999998px" width="7" height="10"><path d="M0 0 L7 5.0 L0 10 Z" fill="#6e6e6e"/></svg>
<div class="t" style="left:195.5px;top:557.10px;color:#000;font-size:14.8px">Show In Resource Manager</div>
<svg class="a" style="left:172px;top:555.00px" width="16" height="16" viewBox="0 0 16 16"><path d="M5 7 H11.5 L8.3 1.4 Z" fill="#6e6e6e"/><rect x="1.1" y="9" width="6.1" height="5.7" fill="#6e6e6e"/><circle cx="11.9" cy="11.9" r="2.9" fill="#6e6e6e"/></svg>
<div class="t" style="right:343.5px;top:557.10px;font-size:14.8px;color:#737373">Ctrl+Shift+T</div>
<div class="a" style="left:165px;top:577.75px;width:392px;height:1px;background:#d1d1d1"></div>
<div class="t" style="left:195.5px;top:587.00px;color:#000;font-size:14.8px"><span class="u">R</span>eformat Code</div>
<div class="t" style="right:343.5px;top:587.00px;font-size:14.8px;color:#737373">Ctrl+Alt+L</div>
<div class="t" style="left:195.5px;top:613.40px;color:#000;font-size:14.8px">Optimi<span class="u">z</span>e Imports</div>
<div class="t" style="right:343.5px;top:613.40px;font-size:14.8px;color:#737373">Ctrl+Alt+O</div>
<div class="t" style="left:195.5px;top:639.80px;color:#000;font-size:14.8px"><span class="u">D</span>elete...</div>
<div class="t" style="right:343.5px;top:639.80px;font-size:14.8px;color:#737373">Delete</div>
<div class="a" style="left:165px;top:660.45px;width:392px;height:1px;background:#d1d1d1"></div>
<div class="t" style="left:195.5px;top:669.70px;color:#000;font-size:14.8px">R<span class="u">u</span>n</div>
<svg class="a" style="left:173.9px;top:667.60px" width="13" height="15"><path d="M0 0 L12 7.2 L0 14.3 Z" fill="#59a869"/></svg>
<svg class="a" style="left:546px;top:671.0999999999997px" width="7" height="10"><path d="M0 0 L7 5.0 L0 10 Z" fill="#6e6e6e"/></svg>
<div class="t" style="left:195.5px;top:696.10px;color:#000;font-size:14.8px"><span class="u">D</span>ebug</div>
<svg class="a" style="left:171px;top:694.7999999999997px" width="16.0" height="17.5" viewBox="0 0 16 17.5"><ellipse cx="8" cy="10.8" rx="5.2" ry="6.4" fill="#59a869"/><path d="M3.5 5.5 A4.5 4 0 0 1 12.5 5.5 Z" fill="#59a869"/><path d="M0 5.8 H16 M0 9.8 H16 M0 14.3 H16 M4.5 0.8 L6.5 3.5 M11.5 0.8 L9.5 3.5" stroke="#59a869" stroke-width="2"/><path d="M5.5 8.6 H10.5 M5.5 12.3 H10.5" stroke="#f2f2f2" stroke-width="1.4"/></svg>
<svg class="a" style="left:546px;top:697.4999999999997px" width="7" height="10"><path d="M0 0 L7 5.0 L0 10 Z" fill="#6e6e6e"/></svg>
<div class="t" style="left:195.5px;top:722.50px;color:#000;font-size:14.8px">Run with Co<span class="u">v</span>erage</div>
<svg class="a" style="left:170px;top:721.00px" width="19" height="18" viewBox="0 0 19 18"><path d="M0 0.5 Q6 -0.5 13 0.5 V10 Q13 13 8 14.5 Q1 12 0 8 Z" fill="#6e6e6e"/><path d="M8.5 3 H10.5 V13.5 H8.5 Z" fill="#f2f2f2"/><path d="M10 6.5 L19 11.8 L10 17 Z" fill="#59a869" stroke="#f2f2f2" stroke-width="0.8"/></svg>
<svg class="a" style="left:546px;top:723.8999999999996px" width="7" height="10"><path d="M0 0 L7 5.0 L0 10 Z" fill="#6e6e6e"/></svg>
<div class="a" style="left:165px;top:743.15px;width:392px;height:1px;background:#d1d1d1"></div>
<div class="t" style="left:195.5px;top:752.40px;color:#000;font-size:14.8px">Create Run Configuration</div>
<svg class="a" style="left:546px;top:753.7999999999996px" width="7" height="10"><path d="M0 0 L7 5.0 L0 10 Z" fill="#6e6e6e"/></svg>
<div class="t" style="left:195.5px;top:778.80px;color:#000;font-size:14.8px">Show in Explorer</div>
<div class="t" style="left:195.5px;top:805.20px;color:#a0a0a0;font-size:14.8px">File <span class="u">P</span>ath</div>
<div class="t" style="right:343.5px;top:805.20px;font-size:14.8px;color:#a0a0a0">Ctrl+Alt+F12</div>
<div class="t" style="left:195.5px;top:831.60px;color:#000;font-size:14.8px">Open in Terminal</div>
<svg class="a" style="left:173px;top:830px" width="14" height="13" viewBox="0 0 14 13"><rect x="0" y="0" width="14" height="12.8" fill="#6e6e6e"/><path d="M2.3 2.6 L5.8 5.4 L2.3 8.2" stroke="#f2f2f2" stroke-width="1.3" fill="none"/><path d="M6.5 10 H11.5" stroke="#f2f2f2" stroke-width="1.2"/></svg>
<div class="a" style="left:165px;top:852.25px;width:392px;height:1px;background:#d1d1d1"></div>
<div class="t" style="left:195.5px;top:861.50px;color:#000;font-size:14.8px">Local <span class="u">H</span>istory</div>
<svg class="a" style="left:546px;top:862.8999999999995px" width="7" height="10"><path d="M0 0 L7 5.0 L0 10 Z" fill="#6e6e6e"/></svg>
<div class="t" style="left:195.5px;top:887.90px;color:#000;font-size:14.8px">Reload from Disk</div>
<svg class="a" style="left:171px;top:884.90px" width="17" height="17" viewBox="0 0 17 17"><path d="M14 6 A6 6 0 0 0 3.2 5" stroke="#6e6e6e" stroke-width="2" fill="none"/><path d="M3 11 A6 6 0 0 0 13.8 12" stroke="#6e6e6e" stroke-width="2" fill="none"/><path d="M1 1.5 L1 8 L7 7 Z" fill="#6e6e6e"/><path d="M16 15.5 L16 9 L10 10 Z" fill="#6e6e6e"/></svg>
<div class="a" style="left:165px;top:908.55px;width:392px;height:1px;background:#d1d1d1"></div>
<div class="t" style="left:195.5px;top:917.80px;color:#000;font-size:14.8px">Compare Directories</div>
<svg class="a" style="left:170px;top:915.80px" width="19" height="20" viewBox="0 0 19 20"><path d="M0 13.6 H6" stroke="#389fd6" stroke-width="2.6"/><path d="M5.5 8.8 L10.4 13.6 L5.5 18.9 Z" fill="#389fd6"/><path d="M12.2 5.9 H18" stroke="#389fd6" stroke-width="2.6"/><path d="M12.6 1 L7.8 6 L12.6 10.9 Z" fill="#389fd6"/></svg>
<div class="t" style="right:343.5px;top:917.80px;font-size:14.8px;color:#737373">Ctrl+D</div>
<div class="a" style="left:165px;top:938.45px;width:392px;height:1px;background:#d1d1d1"></div>
<div class="t" style="left:195.5px;top:947.70px;color:#000;font-size:14.8px">Mark Directory as</div>
<svg class="a" style="left:546px;top:949.0999999999995px" width="7" height="10"><path d="M0 0 L7 5.0 L0 10 Z" fill="#6e6e6e"/></svg>
<div class="a" style="left:557px;top:292px;width:304px;height:700px;background:#f2f2f2;border:1px solid #cbcbcb"></div>
<div class="t" style="left:588.5px;top:299.30px;color:#000;font-size:14.8px">Kotlin Class/File</div>
<svg class="a" style="left:565px;top:296.5px" width="18" height="19" viewBox="0 0 18 19"><path d="M1.3 4.5 L5.9 -0.1 V4.5 Z" fill="#bcc4ca"/><path d="M7.1 -0.2 H12.9 V8.4 H7.1 Z M1 5.7 H7 V17.6 H1 Z M1 5.7 H7.1 V8.4 H1 Z" fill="#a7b1b9"/><defs><linearGradient id="kg1" x1="1" y1="0" x2="0" y2="1"><stop offset="0.35" stop-color="#f88909"/><stop offset="0.75" stop-color="#e44857"/><stop offset="1" stop-color="#c757bc"/></linearGradient></defs><path d="M7.6 9.2 H17.6 V18.9 H7.6 Z" fill="#f2f2f2"/><path d="M8.1 9.7 H12.1 L8.1 14.3 Z" fill="#0fa8f5"/><path d="M12.1 9.7 H17.1 L8.1 18.4 V14.3 Z" fill="url(#kg1)"/><path d="M8.6 18.4 L12.9 14.3 L17.1 18.4 Z" fill="#0fa8f5"/></svg>
<div class="a" style="left:558px;top:318.70px;width:302px;height:26.4px;background:#2675bf"></div>
<div class="t" style="left:588.5px;top:325.70px;color:#fff;font-size:14.8px">Drawable Resource File</div>
<svg class="a" style="left:563px;top:322.59999999999997px" width="19" height="19" viewBox="0 0 19 19"><path d="M3.2 4.8 L7.6 0.4 V4.8 Z" fill="#7f9ab5"/><path d="M9.1 0 H14.9 V8.6 H2.9 V6.5 H9.1 Z" fill="#8ea4bc"/><rect x="0" y="10" width="19" height="9" fill="#b06c53"/><path d="M6.1 12.2 L3.1 14.5 L6.1 16.9 M9.3 12.2 L12.5 14.5 L9.3 16.9" stroke="#3a3a3a" stroke-width="1.3" fill="none"/></svg>
<div class="t" style="left:588.5px;top:352.10px;color:#000;font-size:14.8px">Sample Data Directory</div>
<svg class="a" style="left:563px;top:350.59999999999997px" width="18" height="13.4" viewBox="0 0 18 14" preserveAspectRatio="none"><path d="M0 0 H6 L8.7 2.6 H18 V14 H0 Z" fill="#a7b1b9"/></svg>
<div class="t" style="left:588.5px;top:378.50px;color:#000;font-size:14.8px">File</div>
<svg class="a" style="left:565.7px;top:376.40px" width="13" height="17" viewBox="0 0 13 17"><path d="M0.3 6 L4.6 1.6 V6 Z" fill="#bcc4ca"/><path d="M5.8 0 H12.3 V17 H0 V7.3 H5.8 Z" fill="#a7b1b9"/><path d="M2.2 8.2 H10 M2.2 10.9 H10 M2.2 13.6 H6.2" stroke="#3c3c3c" stroke-width="1.1"/></svg>
<div class="t" style="left:588.5px;top:404.90px;color:#000;font-size:14.8px">Scratch File</div>
<svg class="a" style="left:565.7px;top:402.80px" width="13" height="17" viewBox="0 0 13 17"><path d="M0.3 6 L4.6 1.6 V6 Z" fill="#bcc4ca"/><path d="M5.8 0 H12.3 V17 H0 V7.3 H5.8 Z" fill="#a7b1b9"/><path d="M2.2 8.2 H10 M2.2 10.9 H10 M2.2 13.6 H6.2" stroke="#3c3c3c" stroke-width="1.1"/></svg><svg class="a" style="left:572.4px;top:395.60px" width="11" height="11" viewBox="0 0 11 11"><circle cx="5.5" cy="5.5" r="4.9" fill="#40b6e0" stroke="#f2f2f2" stroke-width="1"/><path d="M5.3 2.8 V5.6 L6.8 7" stroke="#fff" stroke-width="1.1" fill="none"/></svg>
<div class="t" style="right:45px;top:404.90px;font-size:14.8px;color:#737373">Ctrl+Alt+Shift+Insert</div>
<div class="t" style="left:588.5px;top:431.30px;color:#000;font-size:14.8px">Directory</div>
<svg class="a" style="left:563px;top:429.7999999999999px" width="18" height="13.4" viewBox="0 0 18 14" preserveAspectRatio="none"><path d="M0 0 H6 L8.7 2.6 H18 V14 H0 Z" fill="#a7b1b9"/></svg>
<div class="a" style="left:558px;top:451.95px;width:302px;height:1px;background:#d1d1d1"></div>
<div class="t" style="left:588.5px;top:461.20px;color:#000;font-size:14.8px">C++ Class</div>
<svg class="a" style="left:563.1px;top:458.00px" width="18" height="18" viewBox="0 0 18 18"><rect x="0" y="0" width="18" height="17.8" rx="3.5" fill="#d9c9f7"/><text x="9" y="13" font-family="Liberation Sans" font-weight="bold" font-size="11" text-anchor="middle" fill="#3c3c3c">S</text></svg>
<div class="t" style="left:588.5px;top:487.60px;color:#000;font-size:14.8px">C/C++ Source File</div>
<svg class="a" style="left:563px;top:484.09999999999985px" width="19" height="19" viewBox="0 0 19 19"><path d="M3.2 4.6 L7.4 0.4 V4.6 Z" fill="#bcc4ca"/><path d="M8.9 0 H15 V8.6 H2.9 V6.3 H8.9 Z" fill="#a7b1b9"/><rect x="0" y="10" width="19" height="8.8" fill="#c7b3f5"/><text x="9.5" y="17.2" font-family="Liberation Sans" font-weight="bold" font-size="8" text-anchor="middle" fill="#3c3c3c">C++</text></svg>
<div class="t" style="left:588.5px;top:514.00px;color:#000;font-size:14.8px">C/C++ Header File</div>
<svg class="a" style="left:563px;top:510.49999999999983px" width="19" height="19" viewBox="0 0 19 19"><path d="M3.2 4.6 L7.4 0.4 V4.6 Z" fill="#bcc4ca"/><path d="M8.9 0 H15 V8.6 H2.9 V6.3 H8.9 Z" fill="#a7b1b9"/><rect x="0" y="10" width="19" height="8.8" fill="#f4c574"/><text x="2.6" y="17.2" font-family="Liberation Sans" font-weight="bold" font-size="8.5" text-anchor="start" fill="#3c3c3c">H</text></svg>
<div class="a" style="left:558px;top:534.65px;width:302px;height:1px;background:#d1d1d1"></div>
<div class="t" style="left:588.5px;top:543.90px;color:#000;font-size:14.8px">Image Asset</div>
<svg class="a" style="left:564.3px;top:544.8px" width="15.2" height="9.27" viewBox="0 0 20 12.2"><path d="M0.2 12.2 A9.8 9.8 0 0 1 19.8 12.2 Z" fill="#3ddc84"/><path d="M3.3 0.4 L5.8 3.9 M16.7 0.4 L14.2 3.9" stroke="#3ddc84" stroke-width="1.5" stroke-linecap="round"/><circle cx="5.6" cy="8.3" r="1.1" fill="#b6efcf"/><circle cx="14.4" cy="8.3" r="1.1" fill="#b6efcf"/></svg>
<div class="t" style="left:588.5px;top:570.30px;color:#000;font-size:14.8px">Vector Asset</div>
<svg class="a" style="left:564.3px;top:571.1999999999999px" width="15.2" height="9.27" viewBox="0 0 20 12.2"><path d="M0.2 12.2 A9.8 9.8 0 0 1 19.8 12.2 Z" fill="#3ddc84"/><path d="M3.3 0.4 L5.8 3.9 M16.7 0.4 L14.2 3.9" stroke="#3ddc84" stroke-width="1.5" stroke-linecap="round"/><circle cx="5.6" cy="8.3" r="1.1" fill="#b6efcf"/><circle cx="14.4" cy="8.3" r="1.1" fill="#b6efcf"/></svg>
<div class="a" style="left:558px;top:590.95px;width:302px;height:1px;background:#d1d1d1"></div>
<div class="t" style="left:588.5px;top:600.20px;color:#000;font-size:14.8px">Kotlin Script</div>
<svg class="a" style="left:565px;top:596.8999999999999px" width="18" height="19" viewBox="0 0 18 19"><path d="M0.5 -0.2 H12 Q13.8 0 13.8 2.5 Q13.8 5 12.2 8.4 H7.5 V17.6 H2 Q-0.5 17.6 0 13 Q0.5 9 1.2 5 Q1.2 2 0.5 -0.2 Z" fill="#a7b1b9"/><defs><linearGradient id="kg2" x1="1" y1="0" x2="0" y2="1"><stop offset="0.35" stop-color="#f88909"/><stop offset="0.75" stop-color="#e44857"/><stop offset="1" stop-color="#c757bc"/></linearGradient></defs><path d="M7.6 9.2 H17.6 V18.9 H7.6 Z" fill="#f2f2f2"/><path d="M8.1 9.7 H12.1 L8.1 14.3 Z" fill="#0fa8f5"/><path d="M12.1 9.7 H17.1 L8.1 18.4 V14.3 Z" fill="url(#kg2)"/><path d="M8.6 18.4 L12.9 14.3 L17.1 18.4 Z" fill="#0fa8f5"/></svg>
<div class="t" style="left:588.5px;top:626.60px;color:#000;font-size:14.8px">Kotlin Worksheet</div>
<svg class="a" style="left:565px;top:623.2999999999998px" width="18" height="19" viewBox="0 0 18 19"><path d="M0.5 -0.2 H12 Q13.8 0 13.8 2.5 Q13.8 5 12.2 8.4 H7.5 V17.6 H2 Q-0.5 17.6 0 13 Q0.5 9 1.2 5 Q1.2 2 0.5 -0.2 Z" fill="#a7b1b9"/><defs><linearGradient id="kg3" x1="1" y1="0" x2="0" y2="1"><stop offset="0.35" stop-color="#f88909"/><stop offset="0.75" stop-color="#e44857"/><stop offset="1" stop-color="#c757bc"/></linearGradient></defs><path d="M7.6 9.2 H17.6 V18.9 H7.6 Z" fill="#f2f2f2"/><path d="M8.1 9.7 H12.1 L8.1 14.3 Z" fill="#0fa8f5"/><path d="M12.1 9.7 H17.1 L8.1 18.4 V14.3 Z" fill="url(#kg3)"/><path d="M8.6 18.4 L12.9 14.3 L17.1 18.4 Z" fill="#0fa8f5"/></svg>
<div class="a" style="left:558px;top:647.25px;width:302px;height:1px;background:#d1d1d1"></div>
<div class="t" style="left:588.5px;top:656.50px;color:#000;font-size:14.8px">Activity</div>
<svg class="a" style="left:564.3px;top:657.3999999999999px" width="15.2" height="9.27" viewBox="0 0 20 12.2"><path d="M0.2 12.2 A9.8 9.8 0 0 1 19.8 12.2 Z" fill="#3ddc84"/><path d="M3.3 0.4 L5.8 3.9 M16.7 0.4 L14.2 3.9" stroke="#3ddc84" stroke-width="1.5" stroke-linecap="round"/><circle cx="5.6" cy="8.3" r="1.1" fill="#b6efcf"/><circle cx="14.4" cy="8.3" r="1.1" fill="#b6efcf"/></svg>
<svg class="a" style="left:845px;top:657.8999999999997px" width="7" height="10"><path d="M0 0 L7 5.0 L0 10 Z" fill="#6e6e6e"/></svg>
<div class="t" style="left:588.5px;top:682.90px;color:#000;font-size:14.8px">Fragment</div>
<svg class="a" style="left:564.3px;top:683.7999999999998px" width="15.2" height="9.27" viewBox="0 0 20 12.2"><path d="M0.2 12.2 A9.8 9.8 0 0 1 19.8 12.2 Z" fill="#3ddc84"/><path d="M3.3 0.4 L5.8 3.9 M16.7 0.4 L14.2 3.9" stroke="#3ddc84" stroke-width="1.5" stroke-linecap="round"/><circle cx="5.6" cy="8.3" r="1.1" fill="#b6efcf"/><circle cx="14.4" cy="8.3" r="1.1" fill="#b6efcf"/></svg>
<svg class="a" style="left:845px;top:684.2999999999997px" width="7" height="10"><path d="M0 0 L7 5.0 L0 10 Z" fill="#6e6e6e"/></svg>
<div class="t" style="left:588.5px;top:709.00px;color:#000;font-size:14.8px">Folder</div>
<svg class="a" style="left:564.3px;top:709.8999999999999px" width="15.2" height="9.27" viewBox="0 0 20 12.2"><path d="M0.2 12.2 A9.8 9.8 0 0 1 19.8 12.2 Z" fill="#3ddc84"/><path d="M3.3 0.4 L5.8 3.9 M16.7 0.4 L14.2 3.9" stroke="#3ddc84" stroke-width="1.5" stroke-linecap="round"/><circle cx="5.6" cy="8.3" r="1.1" fill="#b6efcf"/><circle cx="14.4" cy="8.3" r="1.1" fill="#b6efcf"/></svg>
<svg class="a" style="left:845px;top:710.3999999999997px" width="7" height="10"><path d="M0 0 L7 5.0 L0 10 Z" fill="#6e6e6e"/></svg>
<div class="t" style="left:588.5px;top:735.10px;color:#000;font-size:14.8px">Service</div>
<svg class="a" style="left:564.3px;top:735.9999999999999px" width="15.2" height="9.27" viewBox="0 0 20 12.2"><path d="M0.2 12.2 A9.8 9.8 0 0 1 19.8 12.2 Z" fill="#3ddc84"/><path d="M3.3 0.4 L5.8 3.9 M16.7 0.4 L14.2 3.9" stroke="#3ddc84" stroke-width="1.5" stroke-linecap="round"/><circle cx="5.6" cy="8.3" r="1.1" fill="#b6efcf"/><circle cx="14.4" cy="8.3" r="1.1" fill="#b6efcf"/></svg>
<svg class="a" style="left:845px;top:736.4999999999998px" width="7" height="10"><path d="M0 0 L7 5.0 L0 10 Z" fill="#6e6e6e"/></svg>
<div class="t" style="left:588.5px;top:761.20px;color:#000;font-size:14.8px">UiComponent</div>
<svg class="a" style="left:564.3px;top:762.0999999999999px" width="15.2" height="9.27" viewBox="0 0 20 12.2"><path d="M0.2 12.2 A9.8 9.8 0 0 1 19.8 12.2 Z" fill="#3ddc84"/><path d="M3.3 0.4 L5.8 3.9 M16.7 0.4 L14.2 3.9" stroke="#3ddc84" stroke-width="1.5" stroke-linecap="round"/><circle cx="5.6" cy="8.3" r="1.1" fill="#b6efcf"/><circle cx="14.4" cy="8.3" r="1.1" fill="#b6efcf"/></svg>
<svg class="a" style="left:845px;top:762.5999999999998px" width="7" height="10"><path d="M0 0 L7 5.0 L0 10 Z" fill="#6e6e6e"/></svg>
<div class="t" style="left:588.5px;top:787.30px;color:#000;font-size:14.8px">Automotive</div>
<svg class="a" style="left:564.3px;top:788.1999999999999px" width="15.2" height="9.27" viewBox="0 0 20 12.2"><path d="M0.2 12.2 A9.8 9.8 0 0 1 19.8 12.2 Z" fill="#3ddc84"/><path d="M3.3 0.4 L5.8 3.9 M16.7 0.4 L14.2 3.9" stroke="#3ddc84" stroke-width="1.5" stroke-linecap="round"/><circle cx="5.6" cy="8.3" r="1.1" fill="#b6efcf"/><circle cx="14.4" cy="8.3" r="1.1" fill="#b6efcf"/></svg>
<svg class="a" style="left:845px;top:788.6999999999998px" width="7" height="10"><path d="M0 0 L7 5.0 L0 10 Z" fill="#6e6e6e"/></svg>
<div class="t" style="left:588.5px;top:813.40px;color:#000;font-size:14.8px">XML</div>
<svg class="a" style="left:564.3px;top:814.3px" width="15.2" height="9.27" viewBox="0 0 20 12.2"><path d="M0.2 12.2 A9.8 9.8 0 0 1 19.8 12.2 Z" fill="#3ddc84"/><path d="M3.3 0.4 L5.8 3.9 M16.7 0.4 L14.2 3.9" stroke="#3ddc84" stroke-width="1.5" stroke-linecap="round"/><circle cx="5.6" cy="8.3" r="1.1" fill="#b6efcf"/><circle cx="14.4" cy="8.3" r="1.1" fill="#b6efcf"/></svg>
<svg class="a" style="left:845px;top:814.7999999999998px" width="7" height="10"><path d="M0 0 L7 5.0 L0 10 Z" fill="#6e6e6e"/></svg>
<div class="t" style="left:588.5px;top:839.50px;color:#000;font-size:14.8px">Wear</div>
<svg class="a" style="left:564.3px;top:840.4px" width="15.2" height="9.27" viewBox="0 0 20 12.2"><path d="M0.2 12.2 A9.8 9.8 0 0 1 19.8 12.2 Z" fill="#3ddc84"/><path d="M3.3 0.4 L5.8 3.9 M16.7 0.4 L14.2 3.9" stroke="#3ddc84" stroke-width="1.5" stroke-linecap="round"/><circle cx="5.6" cy="8.3" r="1.1" fill="#b6efcf"/><circle cx="14.4" cy="8.3" r="1.1" fill="#b6efcf"/></svg>
<svg class="a" style="left:845px;top:840.8999999999999px" width="7" height="10"><path d="M0 0 L7 5.0 L0 10 Z" fill="#6e6e6e"/></svg>
<div class="t" style="left:588.5px;top:865.60px;color:#000;font-size:14.8px">AIDL</div>
<svg class="a" style="left:564.3px;top:866.5px" width="15.2" height="9.27" viewBox="0 0 20 12.2"><path d="M0.2 12.2 A9.8 9.8 0 0 1 19.8 12.2 Z" fill="#3ddc84"/><path d="M3.3 0.4 L5.8 3.9 M16.7 0.4 L14.2 3.9" stroke="#3ddc84" stroke-width="1.5" stroke-linecap="round"/><circle cx="5.6" cy="8.3" r="1.1" fill="#b6efcf"/><circle cx="14.4" cy="8.3" r="1.1" fill="#b6efcf"/></svg>
<svg class="a" style="left:845px;top:866.9999999999999px" width="7" height="10"><path d="M0 0 L7 5.0 L0 10 Z" fill="#6e6e6e"/></svg>
<div class="t" style="left:588.5px;top:891.70px;color:#000;font-size:14.8px">Widget</div>
<svg class="a" style="left:564.3px;top:892.6px" width="15.2" height="9.27" viewBox="0 0 20 12.2"><path d="M0.2 12.2 A9.8 9.8 0 0 1 19.8 12.2 Z" fill="#3ddc84"/><path d="M3.3 0.4 L5.8 3.9 M16.7 0.4 L14.2 3.9" stroke="#3ddc84" stroke-width="1.5" stroke-linecap="round"/><circle cx="5.6" cy="8.3" r="1.1" fill="#b6efcf"/><circle cx="14.4" cy="8.3" r="1.1" fill="#b6efcf"/></svg>
<svg class="a" style="left:845px;top:893.0999999999999px" width="7" height="10"><path d="M0 0 L7 5.0 L0 10 Z" fill="#6e6e6e"/></svg>
<div class="t" style="left:588.5px;top:917.80px;color:#000;font-size:14.8px">Google</div>
<svg class="a" style="left:564.3px;top:918.7px" width="15.2" height="9.27" viewBox="0 0 20 12.2"><path d="M0.2 12.2 A9.8 9.8 0 0 1 19.8 12.2 Z" fill="#3ddc84"/><path d="M3.3 0.4 L5.8 3.9 M16.7 0.4 L14.2 3.9" stroke="#3ddc84" stroke-width="1.5" stroke-linecap="round"/><circle cx="5.6" cy="8.3" r="1.1" fill="#b6efcf"/><circle cx="14.4" cy="8.3" r="1.1" fill="#b6efcf"/></svg>
<svg class="a" style="left:845px;top:919.1999999999999px" width="7" height="10"><path d="M0 0 L7 5.0 L0 10 Z" fill="#6e6e6e"/></svg>
<div class="t" style="left:588.5px;top:943.90px;color:#000;font-size:14.8px">Other</div>
<svg class="a" style="left:564.3px;top:944.8000000000001px" width="15.2" height="9.27" viewBox="0 0 20 12.2"><path d="M0.2 12.2 A9.8 9.8 0 0 1 19.8 12.2 Z" fill="#3ddc84"/><path d="M3.3 0.4 L5.8 3.9 M16.7 0.4 L14.2 3.9" stroke="#3ddc84" stroke-width="1.5" stroke-linecap="round"/><circle cx="5.6" cy="8.3" r="1.1" fill="#b6efcf"/><circle cx="14.4" cy="8.3" r="1.1" fill="#b6efcf"/></svg>
<svg class="a" style="left:845px;top:945.3px" width="7" height="10"><path d="M0 0 L7 5.0 L0 10 Z" fill="#6e6e6e"/></svg>
<div class="a" style="left:552px;top:316px;width:315px;height:32px;border:5px solid #ed1c24"></div>
<div class="a" style="left:859px;top:321px;width:3px;height:22px;background:#fafafa"></div>
</body></html>
